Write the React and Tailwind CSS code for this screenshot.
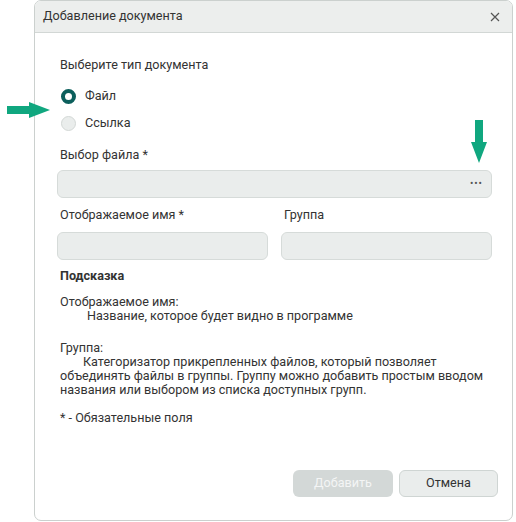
import React from 'react';

function Radio({ checked, label }) {
  return (
    <div className="flex items-center h-[27px]">
      {checked ? (
        <span className="w-[15px] h-[15px] rounded-full border-[4px] border-[#0c5f5c] bg-white"></span>
      ) : (
        <span className="w-[15px] h-[15px] rounded-full border border-[#d3d8d6] bg-[#eaedec]"></span>
      )}
      <span className="ml-[9px] text-[12.6px] text-[#333]">{label}</span>
    </div>
  );
}

export default function App() {
  return (
    <div
      className="relative w-[516px] h-[522px] bg-white overflow-hidden"
      style={{ fontFamily: 'Roboto, "Noto Sans", sans-serif' }}
    >
      <div className="ml-[34px] w-[479px] h-[521px] border border-[#cbd0ce] rounded-[7px] flex flex-col overflow-hidden">
        {/* Header */}
        <div className="h-[32px] shrink-0 bg-[#eceeed] border-b border-[#d2d7d5] flex items-center justify-between pl-[8px] pr-[12px]">
          <span className="text-[12.6px] text-[#333]">Добавление документа</span>
          <svg width="10" height="10" viewBox="0 0 10 10" className="text-[#555]">
            <path d="M1 1L9 9M9 1L1 9" stroke="currentColor" strokeWidth="1.2" />
          </svg>
        </div>

        {/* Body */}
        <div className="flex-1 flex flex-col pl-[22px] pr-[20px] text-[12.6px] text-[#333]">
          <div className="pl-[3px] pt-[23px] leading-[18px]">Выберите тип документа</div>
          <div className="pl-[4px] mt-[9px]">
            <Radio checked label="Файл" />
            <Radio label="Ссылка" />
          </div>

          <div className="pl-[3px] mt-[9px] leading-[18px]">Выбор файла *</div>
          <div className="mt-[6px] h-[28px] rounded-[6px] border border-[#d6dbd9] bg-[#eaedec] flex items-center justify-end pr-[8px]">
            <span className="text-[10px] tracking-[1px] text-[#555] leading-none">•••</span>
          </div>

          <div className="grid grid-cols-2 gap-x-[13px] mt-[8px]">
            <div>
              <div className="pl-[3px] leading-[18px]">Отображаемое имя *</div>
              <div className="mt-[8px] h-[28px] rounded-[6px] border border-[#d6dbd9] bg-[#eaedec]"></div>
            </div>
            <div>
              <div className="pl-[3px] leading-[18px]">Группа</div>
              <div className="mt-[8px] h-[28px] rounded-[6px] border border-[#d6dbd9] bg-[#eaedec]"></div>
            </div>
          </div>

          <div className="pl-[3px] mt-[9px] leading-[14px] whitespace-nowrap">
            <div className="font-bold">Подсказка</div>
            <div className="mt-[12px]">Отображаемое имя:</div>
            <div className="pl-[27px]">Название, которое будет видно в программе</div>
            <div className="mt-[18px]">Группа:</div>
            <div className="pl-[23px]">Категоризатор прикрепленных файлов, который позволяет</div>
            <div>объединять файлы в группы. Группу можно добавить простым вводом</div>
            <div>названия или выбором из списка доступных групп.</div>
            <div className="mt-[14px]">* - Обязательные поля</div>
          </div>

          <div className="mt-auto mb-[23px] flex justify-end gap-[6px] mr-[-6px]">
            <button className="w-[100px] h-[27px] rounded-[6px] bg-[#d3d8d7] text-[#f4f5f5]">Добавить</button>
            <button className="w-[99px] h-[27px] rounded-[6px] bg-[#eaedec] border border-[#cfd5d3] text-[#333]">Отмена</button>
          </div>
        </div>
      </div>

      {/* annotation arrows */}
      <svg className="absolute left-[7px] top-[102px]" width="44" height="16" viewBox="0 0 44 16">
        <path d="M0 4H22V0L43 8L22 16V12H0Z" fill="#10a77f" />
      </svg>
      <svg className="absolute left-[471px] top-[120px]" width="16" height="43" viewBox="0 0 16 43">
        <path d="M4 0H12V22H16L8 43L0 22H4Z" fill="#10a77f" />
      </svg>
    </div>
  );
}
